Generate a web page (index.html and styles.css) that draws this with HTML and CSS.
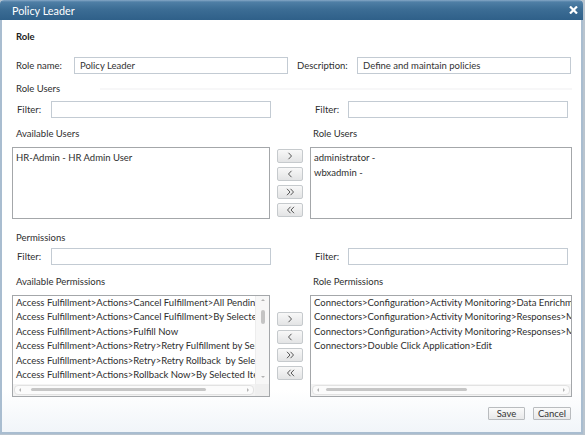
FILE: index.html
```html
<!DOCTYPE html>
<html>
<head>
<meta charset="utf-8">
<link rel="stylesheet" href="styles.css">
</head>
<body>
<div class="dialog">
  <div class="titlebar">
    <span class="title">Policy Leader</span>
    <svg class="close" width="9" height="8" viewBox="0 0 9 8"><path d="M1 0.5 L8 7.5 M8 0.5 L1 7.5" stroke="#fff" stroke-width="2.2" fill="none"/></svg>
  </div>
  <div class="body">
    <div class="heading">Role</div>
    <div class="role-row">
      <span class="lbl lbl-name">Role name:</span>
      <input class="field field-name" type="text" value="Policy Leader">
      <span class="lbl lbl-desc">Description:</span>
      <input class="field field-desc" type="text" value="Define and maintain policies">
    </div>

    <div class="section section-users"><span>Role Users</span><span class="faint-line"></span></div>
    <div class="cols filter-row filter-users">
      <div class="filter"><span class="filter-lbl">Filter:</span><input class="field filter-field" type="text"></div>
      <div></div>
      <div class="filter filter-right"><span class="filter-lbl">Filter:</span><input class="field filter-field" type="text"></div>
    </div>
    <div class="cols list-labels labels-users">
      <span class="list-lbl">Available Users</span>
      <span></span>
      <span class="list-lbl list-lbl-right">Role Users</span>
    </div>
    <div class="cols transfer transfer-users">
      <div class="listbox users-box">
        <div class="item">HR-Admin - HR Admin User</div>
      </div>
      <div class="movers">
        <button class="mv"><svg width="6" height="8" viewBox="0 0 6 8"><polyline points="1.5,0.8 4.5,4 1.5,7.2" fill="none" stroke="#555" stroke-width="1"/></svg></button>
        <button class="mv"><svg width="6" height="8" viewBox="0 0 6 8"><polyline points="4.5,0.8 1.5,4 4.5,7.2" fill="none" stroke="#555" stroke-width="1"/></svg></button>
        <button class="mv"><svg width="9" height="8" viewBox="0 0 9 8"><polyline points="1,0.8 4,4 1,7.2" fill="none" stroke="#555" stroke-width="1"/><polyline points="4.5,0.8 7.5,4 4.5,7.2" fill="none" stroke="#555" stroke-width="1"/></svg></button>
        <button class="mv"><svg width="9" height="8" viewBox="0 0 9 8"><polyline points="4.5,0.8 1.5,4 4.5,7.2" fill="none" stroke="#555" stroke-width="1"/><polyline points="8,0.8 5,4 8,7.2" fill="none" stroke="#555" stroke-width="1"/></svg></button>
      </div>
      <div class="listbox users-box users-right">
        <div class="item">administrator -</div>
        <div class="item">wbxadmin -</div>
      </div>
    </div>

    <div class="section section-perms"><span>Permissions</span></div>
    <div class="cols filter-row filter-perms">
      <div class="filter"><span class="filter-lbl">Filter:</span><input class="field filter-field" type="text"></div>
      <div></div>
      <div class="filter filter-right"><span class="filter-lbl">Filter:</span><input class="field filter-field" type="text"></div>
    </div>
    <div class="cols list-labels labels-perms">
      <span class="list-lbl">Available Permissions</span>
      <span></span>
      <span class="list-lbl list-lbl-right">Role Permissions</span>
    </div>
    <div class="cols transfer transfer-perms">
      <div class="listbox perm-box perm-left">
        <div class="perm-items">
          <div class="pitem">Access Fulfillment&gt;Actions&gt;Cancel Fulfillment&gt;All Pending</div>
          <div class="pitem">Access Fulfillment&gt;Actions&gt;Cancel Fulfillment&gt;By Selected</div>
          <div class="pitem">Access Fulfillment&gt;Actions&gt;Fulfill Now</div>
          <div class="pitem">Access Fulfillment&gt;Actions&gt;Retry&gt;Retry Fulfillment by Selected</div>
          <div class="pitem">Access Fulfillment&gt;Actions&gt;Retry&gt;Retry Rollback &nbsp;by Selected</div>
          <div class="pitem">Access Fulfillment&gt;Actions&gt;Rollback Now&gt;By Selected Items</div>
        </div>
        <div class="vscroll">
          <span class="arr arr-up"></span>
          <div class="vtrack"><div class="vthumb"></div></div>
          <span class="arr arr-down"></span>
        </div>
        <div class="hscroll">
          <div class="hpill">
            <span class="arr arr-left"></span>
            <div class="htrack"><div class="hthumb hthumb-left"></div></div>
            <span class="arr arr-right"></span>
          </div>
        </div>
        <div class="corner"></div>
      </div>
      <div class="movers">
        <button class="mv"><svg width="6" height="8" viewBox="0 0 6 8"><polyline points="1.5,0.8 4.5,4 1.5,7.2" fill="none" stroke="#555" stroke-width="1"/></svg></button>
        <button class="mv"><svg width="6" height="8" viewBox="0 0 6 8"><polyline points="4.5,0.8 1.5,4 4.5,7.2" fill="none" stroke="#555" stroke-width="1"/></svg></button>
        <button class="mv"><svg width="9" height="8" viewBox="0 0 9 8"><polyline points="1,0.8 4,4 1,7.2" fill="none" stroke="#555" stroke-width="1"/><polyline points="4.5,0.8 7.5,4 4.5,7.2" fill="none" stroke="#555" stroke-width="1"/></svg></button>
        <button class="mv"><svg width="9" height="8" viewBox="0 0 9 8"><polyline points="4.5,0.8 1.5,4 4.5,7.2" fill="none" stroke="#555" stroke-width="1"/><polyline points="8,0.8 5,4 8,7.2" fill="none" stroke="#555" stroke-width="1"/></svg></button>
      </div>
      <div class="listbox perm-box perm-right">
        <div class="perm-items">
          <div class="pitem">Connectors&gt;Configuration&gt;Activity Monitoring&gt;Data Enrichment</div>
          <div class="pitem">Connectors&gt;Configuration&gt;Activity Monitoring&gt;Responses&gt;Manage</div>
          <div class="pitem">Connectors&gt;Configuration&gt;Activity Monitoring&gt;Responses&gt;Map</div>
          <div class="pitem">Connectors&gt;Double Click Application&gt;Edit</div>
        </div>
        <div class="hscroll">
          <div class="hpill">
            <span class="arr arr-left"></span>
            <div class="htrack"><div class="hthumb hthumb-right"></div></div>
            <span class="arr arr-right"></span>
          </div>
        </div>
      </div>
    </div>

    <div class="footer">
      <button class="btn btn-save">Save</button>
      <button class="btn btn-cancel">Cancel</button>
    </div>
  </div>
</div>
</body>
</html>
```

FILE: styles.css
```css
* { box-sizing: border-box; }
html, body { margin: 0; padding: 0; }
body {
  width: 585px;
  height: 435px;
  overflow: hidden;
  background: #b9c4ce;
  font-family: Lato, "Noto Sans", sans-serif;
  font-size: 9.5px;
  color: #2e2e2e;
}
.dialog {
  width: 583px;
  height: 434px;
  display: flex;
  flex-direction: column;
  border-radius: 4px 4px 0 0;
  overflow: hidden;
  background: #fff;
}
.titlebar {
  height: 20px;
  flex: none;
  display: flex;
  align-items: center;
  justify-content: space-between;
  padding: 0 5px 0 12px;
  background: linear-gradient(to bottom, #86a8c7 0, #4f7fa6 2px, #3c6d95 9px, #2f6089 20px);
  color: #fff;
  font-size: 10.8px;
}
.close { display: block; }

.body {
  flex: 1;
  border: 2px solid #a9bdd0;
  border-top: 0;
  background: linear-gradient(to bottom, #fff 0, #fff 370px, #f1f5f9 100%);
  padding: 10px 9px 0 10px;
}
.heading {
  font-weight: bold;
  line-height: 14px;
  padding-left: 4px;
  color: #222;
}
.role-row {
  display: flex;
  align-items: center;
  height: 17px;
  margin-top: 13px;
}
.lbl { padding-left: 4px; }
.lbl-name { width: 62px; }
.lbl-desc { width: 60px; margin-left: 9px; padding-left: 0; }
.field {
  height: 17px;
  border: 1px solid #c3cbd3;
  background: #fff;
  padding: 0 5px;
  font-family: inherit;
  font-size: 9.5px;
  color: #333;
  outline: none;
  margin: 0;
}
.field-name, .field-desc { width: 214px; }

.section {
  display: flex;
  align-items: center;
  line-height: 14px;
  padding-left: 4px;
}
.section-users { margin-top: 8px; }
.faint-line {
  height: 2px;
  margin-left: 40px;
  flex: 1;
  background: #f7f7f8;
}
.section-perms { margin-top: 12px; }

.cols {
  display: grid;
  grid-template-columns: 258px 26px 262px;
  column-gap: 7px;
}
.filter-row { height: 17px; }
.filter-users { margin-top: 5px; }
.filter-perms { margin-top: 3px; }
.filter { display: flex; align-items: center; }
.filter-lbl { width: 39px; padding-left: 5px; flex: none; }
.filter-right .filter-lbl { width: 38px; }
.filter-field { width: 220px; flex: none; }

.list-labels { line-height: 14px; }
.labels-users { margin-top: 9px; }
.labels-perms { margin-top: 10px; }
.list-lbl { padding-left: 4px; }
.list-lbl-right { padding-left: 3px; }

.transfer { margin-top: 6px; }
.transfer-users { height: 72px; }
.transfer-perms { height: 102px; }

.listbox {
  border: 1px solid #a4a7aa;
  background: #fff;
  overflow: hidden;
}
.users-box { padding: 2px 3px; }
.item { line-height: 15px; white-space: nowrap; }

.movers {
  display: flex;
  flex-direction: column;
  justify-content: center;
  gap: 4px;
}
.mv {
  width: 26px;
  height: 14px;
  padding: 0;
  margin: 0;
  border: 1px solid #c6cacd;
  border-radius: 2px;
  background: linear-gradient(to bottom, #f8f8f8, #e3e4e5);
  display: flex;
  align-items: center;
  justify-content: center;
}
.mv svg { display: block; }

.perm-box {
  display: grid;
  grid-template-rows: 1fr 12px;
}
.perm-left { grid-template-columns: 1fr 14px; }
.perm-right { grid-template-columns: 1fr; }
.perm-items {
  padding-left: 3px;
  overflow: hidden;
  min-width: 0;
}
.pitem { line-height: 14.4px; white-space: nowrap; }

.vscroll {
  display: flex;
  flex-direction: column;
  align-items: center;
  background: #f7f7f7;
  border-left: 1px solid #ededed;
  padding: 3px 0 6px;
}
.vtrack { flex: 1; width: 4px; padding-top: 9px; }
.vthumb { width: 4px; height: 14px; border-radius: 2px; background: #c4c4c4; }

.hscroll {
  background: #f3f3f3;
  padding: 1px;
}
.hpill {
  height: 10px;
  border: 1px solid #e2e2e2;
  border-radius: 4px;
  background: #fbfbfb;
  display: flex;
  align-items: center;
  padding: 0 4px;
}
.htrack { flex: 1; height: 4px; padding: 0 4px; }
.hthumb { height: 3px; border-radius: 2px; background: #c6c6c6; }
.hthumb-left { margin-left: 6px; width: 175px; }
.hthumb-right { margin-left: 3px; width: 141px; }
.corner { background: #efefef; }

.arr { width: 0; height: 0; flex: none; }
.arr-up { border-left: 2px solid transparent; border-right: 2px solid transparent; border-bottom: 2px solid #b3b3b3; }
.arr-down { border-left: 2px solid transparent; border-right: 2px solid transparent; border-top: 2px solid #b3b3b3; }
.arr-left { border-top: 2px solid transparent; border-bottom: 2px solid transparent; border-right: 2px solid #b3b3b3; }
.arr-right { border-top: 2px solid transparent; border-bottom: 2px solid transparent; border-left: 2px solid #b3b3b3; }

.footer {
  display: flex;
  justify-content: flex-end;
  gap: 8px;
  margin-top: 10px;
  padding-right: 1px;
}
.btn {
  height: 13px;
  padding: 0;
  margin: 0;
  border: 1px solid #b9bcbf;
  border-radius: 1px;
  background: linear-gradient(to bottom, #fafafa, #e8e9ea);
  font-family: inherit;
  font-size: 9.5px;
  line-height: 11px;
  color: #333;
}
.btn-save { width: 37px; }
.btn-cancel { width: 38px; }
```
